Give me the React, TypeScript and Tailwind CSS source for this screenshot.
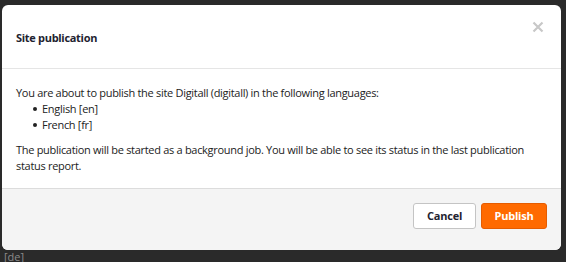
export default function App() {
  return (
    <div
      className="relative w-[566px] h-[262px] bg-[#2a2a2a] overflow-hidden"
      style={{ fontFamily: '"Open Sans", "Noto Sans", sans-serif' }}
    >
      <div className="absolute left-0 top-[249px] text-[11px] leading-[16px] text-[#8a8a8a] pl-[4px]">[de]</div>
      <div className="absolute left-[2px] top-[5px] w-[559px] h-[245px] bg-white rounded-[6px] overflow-hidden flex flex-col">
        <div className="relative h-[64px] shrink-0 border-b border-[#e5e5e5] flex items-center px-[14px]">
          <span className="text-[11px] font-bold tracking-[-0.3px] text-[#1e2330] pt-[3px]">Site publication</span>
          <svg className="absolute right-[17px] top-[16px]" width="12" height="12" viewBox="0 0 12 12">
            <path d="M1.5 1.5 L10.5 10.5 M10.5 1.5 L1.5 10.5" stroke="#c8c8c8" strokeWidth="2.2" strokeLinecap="butt" />
          </svg>
        </div>
        <div className="flex-1 px-[14px] pt-[16px] text-[11px] tracking-[-0.3px] leading-[16px] text-[#222]">
          <p>You are about to publish the site Digitall (digitall) in the following languages:</p>
          <ul className="pl-[17px]">
            <li className="flex items-center gap-[5px]"><span className="w-[4px] h-[4px] rounded-full bg-[#222] inline-block" />English [en]</li>
            <li className="flex items-center gap-[5px]"><span className="w-[4px] h-[4px] rounded-full bg-[#222] inline-block" />French [fr]</li>
          </ul>
          <p className="mt-[9px] pr-[20px]">The publication will be started as a background job. You will be able to see its status in the last publication status report.</p>
        </div>
        <div className="h-[62px] shrink-0 bg-[#f4f4f4] border-t border-[#dcdcdc] flex items-start justify-end gap-[5px] pr-[14px] pt-[14px]">
          <button className="h-[26px] w-[63px] rounded-[3px] border border-[#c4c4c4] bg-white text-[11px] font-bold tracking-[-0.2px] text-[#1e2330]">Cancel</button>
          <button className="h-[26px] w-[66px] rounded-[3px] border border-[#e55c00] bg-[#ff6a00] text-[11px] font-bold tracking-[-0.2px] text-white">Publish</button>
        </div>
      </div>
    </div>
  );
}
